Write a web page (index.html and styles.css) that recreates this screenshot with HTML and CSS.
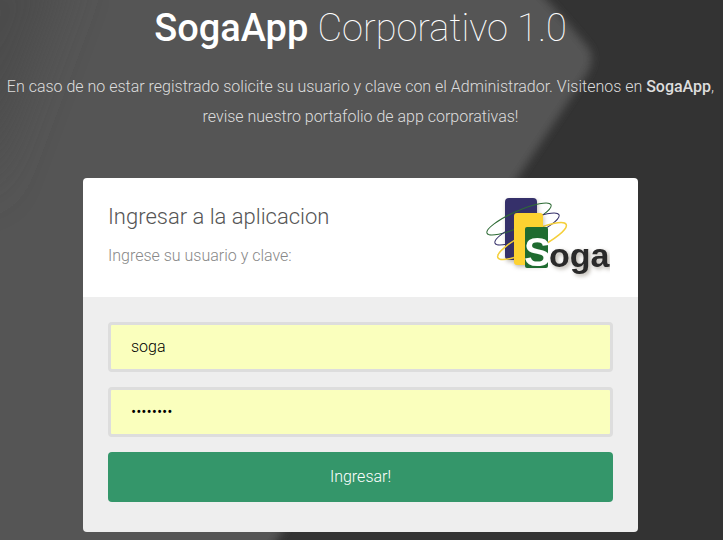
FILE: index.html
```html
<!DOCTYPE html>
<html lang="en">
<head>
  <meta charset="UTF-8">
  <title>SogaApp Corporativo</title>
  <link rel="stylesheet" href="styles.css">
</head>
<body>

  <svg class="backdrop" viewBox="0 0 723 540" preserveAspectRatio="none" aria-hidden="true">
    <defs>
      <filter id="soft" x="-20%" y="-20%" width="140%" height="140%">
        <feGaussianBlur stdDeviation="4"></feGaussianBlur>
      </filter>
      <filter id="softer" x="-30%" y="-30%" width="160%" height="160%">
        <feGaussianBlur stdDeviation="24"></feGaussianBlur>
      </filter>
    </defs>
    <rect width="723" height="540" fill="#333"></rect>
    <path d="M-60 -40H510Q575 30 590 50Q594 60 588 72L250 580H-60Z" fill="#555" filter="url(#soft)"></path>
    <path d="M-60 -40H70L-20 200Z" fill="#4b4b4b" filter="url(#softer)"></path>
  </svg>

  <div class="top">
    <h1><strong>SogaApp</strong> Corporativo 1.0</h1>
    <p>En caso de no estar registrado solicite su usuario y clave con el Administrador. Visitenos en <strong>SogaApp</strong>, revise nuestro portafolio de app corporativas!</p>
  </div>

  <div class="card">
    <div class="card-top">
      <div class="card-title">
        <h3>Ingresar a la aplicacion</h3>
        <p>Ingrese su usuario y clave:</p>
      </div>
      <svg class="logo" width="130" height="90" viewBox="0 0 130 90">
        <rect class="logo-shade" x="25" y="8" width="32" height="62" rx="4" fill="#35306a"></rect>
        <ellipse cx="39" cy="29" rx="35" ry="8" transform="rotate(-24 39 29)" fill="none" stroke="#2e6b35" stroke-width="1"></ellipse>
        <ellipse cx="47" cy="39" rx="35" ry="8" transform="rotate(-24 47 39)" fill="none" stroke="#35306a" stroke-width="1"></ellipse>
        <ellipse cx="52" cy="51" rx="38" ry="9" transform="rotate(-26 52 51)" fill="none" stroke="#f5cf3a" stroke-width="1.5"></ellipse>
        <rect class="logo-shade" x="34" y="23" width="29" height="52" rx="3" fill="#fdd231"></rect>
        <rect x="45" y="37" width="23" height="41" rx="2" fill="#1f6b30"></rect>
        <text class="logo-s" x="44" y="76">S</text>
        <text class="logo-oga" x="69" y="77">oga</text>
      </svg>
    </div>
    <form class="card-bottom">
      <input class="field" type="text" name="username" value="soga">
      <input class="field" type="password" name="password" value="12345678">
      <button class="btn" type="submit">Ingresar!</button>
    </form>
  </div>

</body>
</html>
```

FILE: styles.css
```css
html, body {
  height: 100%;
}

body {
  width: 721px;
  margin: 0;
  overflow: hidden;
  background-color: #444;
  font-family: Roboto, Arial, sans-serif;
  font-weight: 300;
  font-size: 16px;
  color: #fff;
}

.backdrop {
  position: absolute;
  top: 0;
  left: 0;
  width: 723px;
  height: 540px;
  z-index: -1;
}

.top {
  text-align: center;
}

.top h1 {
  margin: 0;
  padding-top: 5px;
  font-size: 38px;
  line-height: 46px;
  font-weight: 100;
}

.top h1 strong {
  font-weight: 500;
}

.top p {
  margin: 21px 0 0;
  line-height: 30px;
  color: #ddd;
}

.top p strong {
  font-weight: 500;
}

.card {
  width: 555px;
  margin: 46px auto 0;
  border-radius: 4px;
  overflow: hidden;
}

.card-top {
  display: flex;
  justify-content: space-between;
  height: 119px;
  background: #fff;
  padding: 0 25px;
  box-sizing: border-box;
}

.card-title h3 {
  margin: 24px 0 0;
  font-size: 22px;
  line-height: 30px;
  font-weight: 300;
  color: #555;
}

.card-title p {
  margin: 12px 0 0;
  line-height: 24px;
  color: #888;
}

.logo {
  margin: 12px 3px 0 0;
  filter: blur(0.4px);
}

.logo-shade {
  filter: drop-shadow(1px 2px 2px rgba(80, 70, 50, 0.35));
}

.logo-s {
  font-family: "Liberation Sans", Arial, sans-serif;
  font-weight: 700;
  font-size: 40px;
  fill: #fff;
}

.logo-oga {
  font-family: "Liberation Sans", Arial, sans-serif;
  font-weight: 700;
  font-size: 34px;
  fill: #2a2a2a;
  filter: drop-shadow(2px 2px 2px rgba(90, 80, 60, 0.45));
}

.card-bottom {
  display: flex;
  flex-direction: column;
  gap: 15px;
  height: 235px;
  padding: 25px 25px 0;
  box-sizing: border-box;
  background: #eee;
}

.field {
  height: 50px;
  box-sizing: border-box;
  padding: 0 20px 2px;
  border: 3px solid #ddd;
  border-radius: 4px;
  outline: none;
  background: #faffbd;
  font-family: Roboto, Arial, sans-serif;
  font-weight: 300;
  font-size: 16px;
  color: #000;
}

.btn {
  height: 50px;
  padding: 0 0 2px;
  border: none;
  border-radius: 4px;
  background: #34966a;
  font-family: Roboto, Arial, sans-serif;
  font-weight: 300;
  font-size: 16px;
  color: #fff;
  cursor: pointer;
}
```
